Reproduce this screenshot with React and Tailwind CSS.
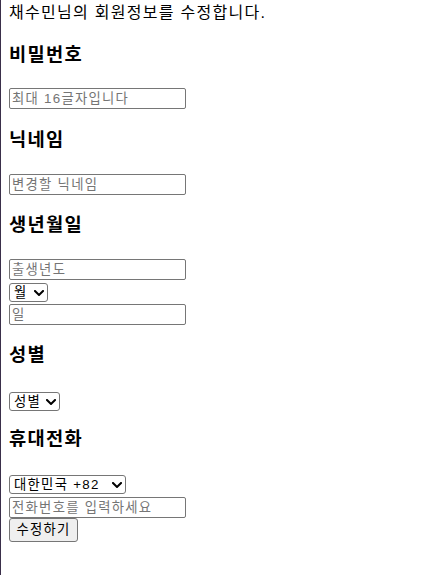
import { useState } from 'react';

const font = 'font-["Liberation_Sans","Noto_Sans_CJK_KR",sans-serif]';

const Chevron = () => (
  <svg width="10" height="6" viewBox="0 0 10 6" className="pointer-events-none absolute right-[4px] top-1/2 -translate-y-1/2">
    <path d="M1 1 L5 5 L9 1" fill="none" stroke="#000" strokeWidth="2" strokeLinecap="square" />
  </svg>
);

const Select = ({ width, value, onChange, options, className = '' }) => (
  <div className={`relative ${width} ${className}`}>
    <select
      value={value}
      onChange={(e) => onChange(e.target.value)}
      className="block h-[19px] w-full appearance-none rounded-[3px] border border-[#767676] bg-white pl-[4px] pr-[16px] text-[13.33px] leading-[17px] text-black outline-none"
    >
      {options.map((o) => (
        <option key={o} value={o}>
          {o}
        </option>
      ))}
    </select>
    <Chevron />
  </div>
);

const Field = ({ placeholder, className = '', ...rest }) => (
  <input
    {...rest}
    placeholder={placeholder}
    className={`block h-[21px] w-[177px] rounded-[2px] border border-[#767676] bg-white px-[2px] text-[13.33px] leading-[17px] text-black outline-none placeholder:text-[#757575] ${className}`}
  />
);

const Heading = ({ children, className = '' }) => (
  <h3 className={`text-[18.72px] leading-[25px] font-bold text-black ${className}`}>{children}</h3>
);

const App = () => {
  const [month, setMonth] = useState('월');
  const [gender, setGender] = useState('성별');
  const [country, setCountry] = useState('대한민국 +82');

  return (
    <div className={`min-h-[575px] border-l border-[#3a2f4a] bg-white pl-[8px] ${font} tracking-[0.08em] text-black`}>
      <form onSubmit={(e) => e.preventDefault()} className="flex flex-col items-start">
        <p className="mt-[2px] text-[16px] leading-[22px]">채수민님의 회원정보를 수정합니다.</p>

        <Heading className="mt-[18px]">비밀번호</Heading>
        <Field type="password" placeholder="최대 16글자입니다" className="mt-[21px]" />

        <Heading className="mt-[18px]">닉네임</Heading>
        <Field placeholder="변경할 닉네임" className="mt-[22px]" />

        <Heading className="mt-[17px]">생년월일</Heading>
        <Field placeholder="출생년도" className="mt-[22px]" />
        <Select
          width="w-[39px]"
          value={month}
          onChange={setMonth}
          options={['월', '1', '2', '3', '4', '5', '6', '7', '8', '9', '10', '11', '12']}
          className="mt-[3px]"
        />
        <Field placeholder="일" className="mt-[2px]" />

        <Heading className="mt-[17px]">성별</Heading>
        <Select
          width="w-[51px]"
          value={gender}
          onChange={setGender}
          options={['성별', '남자', '여자']}
          className="mt-[25px]"
        />

        <Heading className="mt-[15px]">휴대전화</Heading>
        <Select
          width="w-[117px]"
          value={country}
          onChange={setCountry}
          options={['대한민국 +82', '미국 +1', '일본 +81']}
          className="mt-[24px]"
        />
        <Field placeholder="전화번호를 입력하세요" className="mt-[3px]" />
        <button
          type="submit"
          className="h-[24px] w-[69px] rounded-[3px] border border-[#767676] bg-[#efefef] text-[13.33px] leading-[20px] text-black"
        >
          수정하기
        </button>
      </form>
    </div>
  );
};

export default App;
